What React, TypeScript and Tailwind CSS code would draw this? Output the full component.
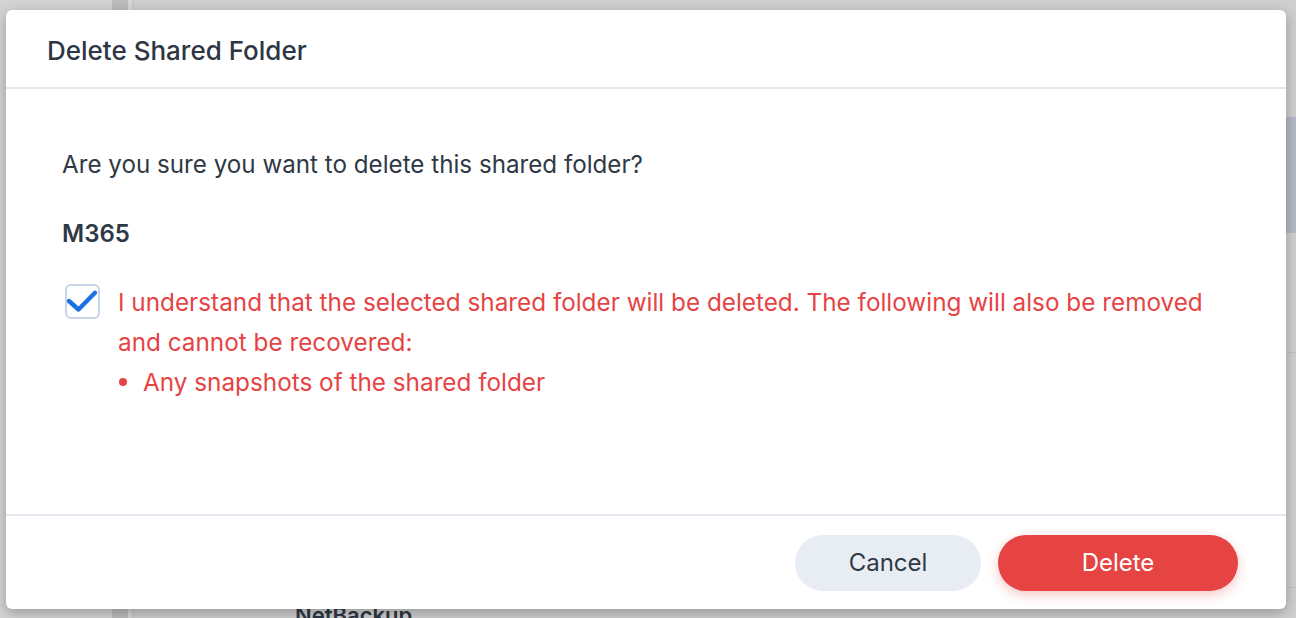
const font = { fontFamily: 'Inter, Roboto, "Noto Sans", Arial, sans-serif' }

function Backdrop() {
  return (
    <div className="absolute inset-0 flex bg-[#cfcfcf]">
      <div className="w-[112px] bg-[#d4d4d4]" />
      <div className="w-[16px] bg-[#bdbdbd]" />
      <div className="w-[4px] bg-[#d8d8d8]" />
      <div className="w-[2px] bg-[#c4cad3]" />
      <div className="flex-1 flex flex-col">
        <div className="h-[117px] shrink-0" />
        <div className="h-[116px] shrink-0 bg-[#b3b9c6]" />
        <div className="h-[120px] shrink-0 border-b border-[#bcc2cb]" />
        <div className="h-[235px] shrink-0 border-b border-[#bcc2cb]" />
        <div className="shrink-0 pl-[161px] pt-[14px] text-[22px] leading-[26px] font-semibold text-[#2d3642]">
          NetBackup
        </div>
      </div>
    </div>
  )
}

function CheckMark() {
  return (
    <svg width="35" height="35" viewBox="0 0 35 35" fill="none" className="absolute -left-[2px] -top-[2px]">
      <path
        d="M4 17L13.5 25.5L30 8.8"
        stroke="#1d72e3"
        strokeWidth="4.4"
        strokeLinecap="round"
        strokeLinejoin="round"
      />
    </svg>
  )
}

export default function App() {
  return (
    <div className="relative w-[1296px] h-[618px] overflow-hidden" style={font}>
      <Backdrop />

      <div className="absolute left-[6px] top-[10px] w-[1280px] h-[599px] bg-white rounded-[6px] shadow-[0_4px_14px_rgba(0,0,0,0.28)] flex flex-col">
        {/* Header */}
        <div className="h-[79px] flex items-center pl-[41px] pt-[3px] border-b-2 border-[#e3e7f0]">
          <h1 className="text-[26px] font-medium text-[#2d3642]">Delete Shared Folder</h1>
        </div>

        {/* Body */}
        <div className="flex-1 pl-[56px] pr-[56px] pt-[60px]">
          <p className="text-[24.2px] leading-[32px] text-[#2f3946]">
            Are you sure you want to delete this shared folder?
          </p>
          <p className="mt-[37px] text-[24px] leading-[32px] font-semibold text-[#2f3946]">M365</p>

          <div className="mt-[32px] flex gap-[18px]">
            <div className="relative ml-[3px] mt-[2px] w-[35px] h-[35px] shrink-0 rounded-[6px] border-2 border-[#c7d5e6] bg-white">
              <CheckMark />
            </div>
            <div className="text-[24.3px] leading-[40px] text-[#e64444]">
              <p>
                I understand that the selected shared folder will be deleted. The following will also be removed
                and cannot be recovered:
              </p>
              <ul>
                <li className="flex items-center gap-[16px] pl-[1px]">
                  <span className="w-[8px] h-[8px] rounded-full bg-[#e64444]" />
                  <span>Any snapshots of the shared folder</span>
                </li>
              </ul>
            </div>
          </div>
        </div>

        {/* Footer */}
        <div className="h-[95px] border-t-2 border-[#e3e7f0] flex items-center justify-end gap-[17px] pr-[48px]">
          <button className="w-[186px] h-[56px] rounded-full bg-[#e8edf4] text-[24px] text-[#2f3946]">
            Cancel
          </button>
          <button className="w-[240px] h-[56px] rounded-full bg-[#e64343] text-[24px] text-white shadow-[0_4px_12px_rgba(230,67,67,0.3)]">
            Delete
          </button>
        </div>
      </div>
    </div>
  )
}
